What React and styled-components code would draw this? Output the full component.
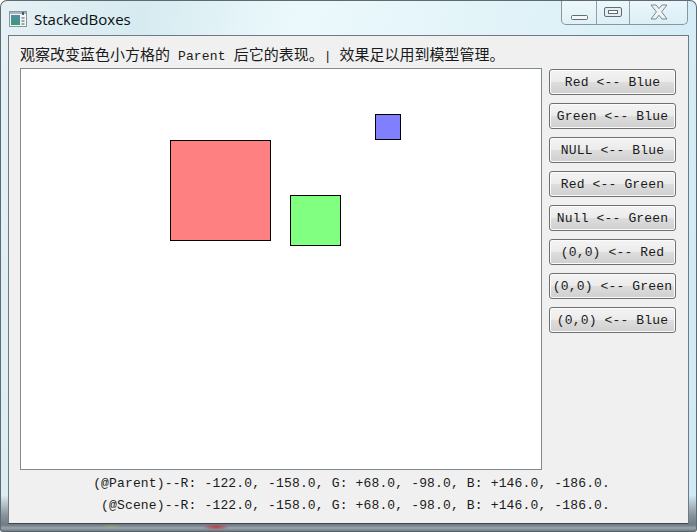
import React from 'react'
import styled, { createGlobalStyle } from 'styled-components'

const GlobalStyle = createGlobalStyle`
  html, body {
    margin: 0;
    padding: 0;
    background: #fff;
  }
`;

const Window = styled.div`
  box-sizing: border-box;
  width: 697px;
  height: 532px;
  position: relative;
  overflow: hidden;
  display: flex;
  flex-direction: column;
  padding: 0 7px 7px;
  border: 1px solid #5d6a72;
  border-bottom: 1px solid #59636a;
  border-radius: 7px 7px 3px 3px;
  background:
    radial-gradient(ellipse 12px 2px at 110px 526px, rgba(170, 175, 100, 0.6), rgba(170, 175, 100, 0)),
    radial-gradient(ellipse 14px 3px at 215px 526px, rgba(195, 45, 50, 0.85), rgba(195, 45, 50, 0)),
    linear-gradient(to bottom, rgba(120, 130, 140, 0) 494px, #8b9399 514px, #6f7c86 524px, #9aa5ac 527px, #6f7c86 530px),
    linear-gradient(100deg, #e6f1f4 0%, #d6ebf0 18%, #ecf9fc 38%, #dff2f7 70%, #cfe9f6 100%);
`;

const TitleBar = styled.div`
  height: 34px;
  margin-left: 1px;
  display: flex;
  align-items: center;
  gap: 7px;
  padding-top: 1px;
  box-sizing: border-box;
`;

const Title = styled.span`
  font-family: "Open Sans", "Noto Sans", sans-serif;
  font-size: 15px;
  color: #0b1014;
`;

const CaptionButtons = styled.div`
  position: absolute;
  top: -1px;
  right: 8px;
  width: 127px;
  height: 25px;
  box-sizing: border-box;
  display: flex;
  border: 1px solid #88979f;
  border-top: none;
  border-radius: 0 0 5px 5px;
  background: linear-gradient(to bottom, rgba(255, 255, 255, 0.5), rgba(225, 240, 245, 0.35));
`;

const CaptionButton = styled.div`
  width: ${({ $w }) => $w}px;
  display: flex;
  align-items: center;
  justify-content: center;
  border-right: ${({ $last }) => ($last ? 'none' : '1px solid #8fa0a8')};
  box-sizing: border-box;
`;

const Client = styled.div`
  flex: 1;
  box-sizing: border-box;
  border: 1px solid #6e7b82;
  border-bottom-color: #3f464a;
  background: #f0f0f0;
  padding: 0 11px;
  display: flex;
  flex-direction: column;
  color: #1a1a1a;
  font-family: "Liberation Mono", "Noto Sans CJK SC", monospace;
  font-size: 13px;
  letter-spacing: 0.15px;
`;

const Hint = styled.div`
  height: 32px;
  line-height: 22px;
  padding-top: 7px;
  box-sizing: border-box;
  white-space: pre;
`;

const Cjk = styled.span`
  font-family: "Noto Sans CJK SC", sans-serif;
  font-size: 15px;
  letter-spacing: 0;
`;

const Main = styled.div`
  display: flex;
  gap: 7px;
  height: 402px;
`;

const Canvas = styled.div`
  width: 522px;
  height: 402px;
  box-sizing: border-box;
  border: 1px solid #7f8a90;
  background: #fff;
  position: relative;
`;

const Square = styled.div`
  position: absolute;
  left: ${({ $x }) => $x}px;
  top: ${({ $y }) => $y}px;
  width: ${({ $size }) => $size}px;
  height: ${({ $size }) => $size}px;
  box-sizing: border-box;
  border: 1px solid #000;
  background: ${({ $color }) => $color};
`;

const Side = styled.div`
  display: flex;
  flex-direction: column;
  gap: 8px;
  padding-top: 1px;
`;

const Button = styled.button`
  width: 127px;
  height: 26px;
  padding: 0;
  box-sizing: border-box;
  border: 1px solid #707070;
  border-radius: 3px;
  box-shadow: inset 0 0 0 1px #fbfbfb;
  background: linear-gradient(to bottom, #f4f4f4 0%, #ebebeb 48%, #dddddd 52%, #cfcfcf 100%);
  color: #1a1a1a;
  font-family: "Liberation Mono", monospace;
  font-size: 13px;
  letter-spacing: 0.15px;
  white-space: pre;
`;

const Readout = styled.div`
  display: flex;
  flex-direction: column;
  align-items: flex-end;
  padding: 3px 67px 0 0;
`;

const ReadoutLine = styled.div`
  height: 22px;
  line-height: 22px;
  white-space: pre;
`;

const AppIcon = () => (
  <svg width="18" height="16" viewBox="0 0 18 16">
    <defs>
      <linearGradient id="iconPic" x1="0" y1="0" x2="0" y2="1">
        <stop offset="0" stopColor="#5b86b0" />
        <stop offset="1" stopColor="#35a06c" />
      </linearGradient>
    </defs>
    <rect x="0.5" y="0.5" width="17" height="15" fill="#f2f5f6" stroke="#8b969c" />
    <rect x="1" y="1" width="16" height="2" fill="#aab6bd" />
    <rect x="2" y="4" width="9" height="10" fill="url(#iconPic)" />
    <rect x="13" y="1" width="2" height="3" fill="#4a5a66" />
    <rect x="12.5" y="6" width="3" height="2" fill="#9aa6ac" />
    <rect x="12.5" y="9" width="3" height="2" fill="#9aa6ac" />
    <rect x="12.5" y="12" width="3" height="2" fill="#9aa6ac" />
  </svg>
);

const MinIcon = () => (
  <svg width="17" height="5" viewBox="0 0 17 5" style={{ marginTop: 11 }}>
    <rect x="0.5" y="0.5" width="16" height="4" rx="1" fill="#f4f7f8" stroke="#5f6d75" />
  </svg>
);

const MaxIcon = () => (
  <svg width="18" height="10" viewBox="0 0 18 10">
    <rect x="0.5" y="0.5" width="17" height="9" rx="1.5" fill="#e6edf0" stroke="#5f6d75" />
    <rect x="4.5" y="3.5" width="9" height="3" fill="#fff" stroke="#5f6d75" />
  </svg>
);

const CloseIcon = () => (
  <svg width="18" height="16" viewBox="0 0 18 16">
    <path
      d="M1 1h5l3 3.6L12 1h5l-5.4 6.8L17 15h-5l-3-3.8L6 15H1l5.4-7.2z"
      fill="#eef3f5"
      stroke="#7a878e"
    />
  </svg>
);

const buttons = [
  'Red <-- Blue',
  'Green <-- Blue',
  'NULL <-- Blue',
  'Red <-- Green',
  'Null <-- Green',
  '(0,0) <-- Red',
  '(0,0) <-- Green',
  '(0,0) <-- Blue',
];

const App = () => {
  return (
    <Window>
      <GlobalStyle />
      <TitleBar>
        <AppIcon />
        <Title>StackedBoxes</Title>
      </TitleBar>
      <CaptionButtons>
        <CaptionButton $w={35}><MinIcon /></CaptionButton>
        <CaptionButton $w={33}><MaxIcon /></CaptionButton>
        <CaptionButton $w={57} $last><CloseIcon /></CaptionButton>
      </CaptionButtons>
      <Client>
        <Hint>
          <Cjk>观察改变蓝色小方格的</Cjk> Parent <Cjk>后它的表现。</Cjk>| <Cjk>效果足以用到模型管理。</Cjk>
        </Hint>
        <Main>
          <Canvas>
            <Square $x={149} $y={71} $size={101} $color="#ff8080" />
            <Square $x={269} $y={126} $size={51} $color="#80ff80" />
            <Square $x={354} $y={45} $size={26} $color="#8080ff" />
          </Canvas>
          <Side>
            {buttons.map((label) => (
              <Button key={label}>{label}</Button>
            ))}
          </Side>
        </Main>
        <Readout>
          <ReadoutLine>(@Parent)--R: -122.0, -158.0, G: +68.0, -98.0, B: +146.0, -186.0.</ReadoutLine>
          <ReadoutLine>(@Scene)--R: -122.0, -158.0, G: +68.0, -98.0, B: +146.0, -186.0.</ReadoutLine>
        </Readout>
      </Client>
    </Window>
  );
}

export default App;
